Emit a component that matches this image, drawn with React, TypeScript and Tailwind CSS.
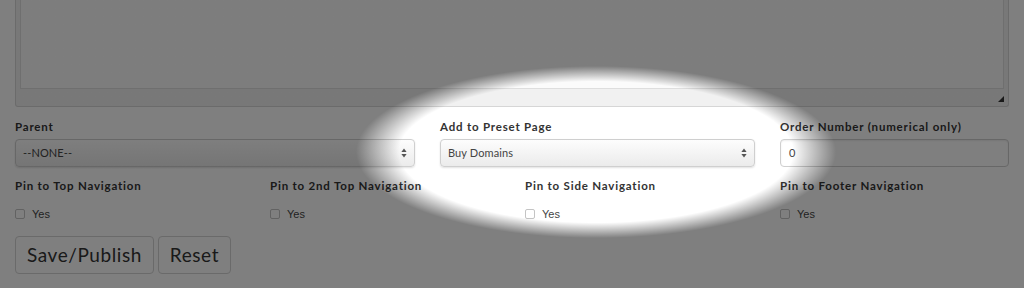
import React from "react";

function Arrows() {
  return (
    <svg width="6" height="10" viewBox="0 0 6 10" className="shrink-0">
      <path d="M3 0.5 L5.6 4 L0.4 4 Z" fill="#555" />
      <path d="M3 9.5 L5.6 6 L0.4 6 Z" fill="#555" />
    </svg>
  );
}

function FakeSelect({ value, width }: { value: string; width: string }) {
  return (
    <div
      className={`${width} h-[28px] flex items-center justify-between pl-[7px] pr-[7px] rounded-[4px] border border-[#cfcfcf] bg-gradient-to-b from-[#fdfdfd] to-[#ebebeb] shadow-[0_1px_2px_rgba(0,0,0,0.12)] text-[11px] text-[#444] tracking-[0.01em]`}
    >
      <span>{value}</span>
      <Arrows />
    </div>
  );
}

function Label({ children }: { children: React.ReactNode }) {
  return (
    <div className="h-[16px] leading-[16px] text-[11.5px] font-bold tracking-[0.07em] text-[#333] whitespace-nowrap">
      {children}
    </div>
  );
}

function Check() {
  return (
    <div className="flex items-center h-[16px] gap-[7px]">
      <div className="w-[10px] h-[10px] rounded-[2px] border border-[#c4c4c4] bg-white" />
      <span className="text-[11px] text-[#444] font-['Liberation_Sans',sans-serif]">Yes</span>
    </div>
  );
}

export default function App() {
  return (
    <div className="relative w-[1024px] h-[288px] bg-white overflow-hidden font-['Lato',sans-serif] text-[#333]">
      <div className="px-[15px]">
        <div className="relative h-[107px] border-x border-b border-[#d6d6d6] bg-[#f1f1f1] rounded-b-[3px] px-[4px]">
          <div className="h-[89px] border-x border-b border-[#dedede] bg-[#fbfbfb]" />
          <svg width="6" height="6" viewBox="0 0 6 6" className="absolute right-[4px] bottom-[4px]">
            <path d="M6 0 L6 6 L0 6 Z" fill="#333" />
          </svg>
        </div>
      </div>

      <div className="flex px-[15px] gap-[25px] mt-[12px]">
        <div className="w-[400px] shrink-0 flex flex-col gap-[4px]">
          <Label>Parent</Label>
          <FakeSelect value="--NONE--" width="w-[400px]" />
        </div>
        <div className="w-[315px] shrink-0 flex flex-col gap-[4px]">
          <Label>Add to Preset Page</Label>
          <FakeSelect value="Buy Domains" width="w-[315px]" />
        </div>
        <div className="w-[229px] shrink-0 flex flex-col gap-[4px]">
          <Label>Order Number (numerical only)</Label>
          <div className="h-[28px] flex items-center px-[8px] rounded-[4px] border border-[#cfcfcf] bg-white shadow-[inset_0_1px_2px_rgba(0,0,0,0.08)] text-[11px] text-[#444]">
            0
          </div>
        </div>
      </div>

      <div className="flex pl-[15px] mt-[11px]">
        {[
          "Pin to Top Navigation",
          "Pin to 2nd Top Navigation",
          "Pin to Side Navigation",
          "Pin to Footer Navigation",
        ].map((t) => (
          <div key={t} className="w-[255px] shrink-0 flex flex-col gap-[12px]">
            <Label>{t}</Label>
            <Check />
          </div>
        ))}
      </div>

      <div className="flex px-[15px] gap-[4px] mt-[14px]">
        <button className="h-[38px] px-[11px] rounded-[4px] border border-[#d4d4d4] bg-white text-[19px] text-[#333] tracking-[0.03em]">
          Save/Publish
        </button>
        <button className="h-[38px] px-[11px] rounded-[4px] border border-[#d4d4d4] bg-white text-[19px] text-[#333] tracking-[0.03em]">
          Reset
        </button>
      </div>

      <div className="absolute inset-0 pointer-events-none bg-[radial-gradient(ellipse_240px_86px_at_596px_152px,transparent_82%,rgba(0,0,0,0.5)_100%)]" />
    </div>
  );
}
